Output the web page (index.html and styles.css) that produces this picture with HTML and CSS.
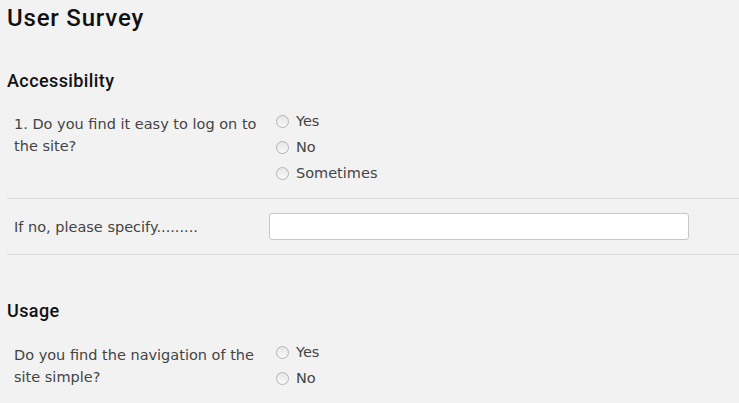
FILE: index.html
```html
<!DOCTYPE html>
<html>
<head>
<meta charset="utf-8">
<link rel="stylesheet" href="styles.css">
</head>
<body>
<h1 class="title">User Survey</h1>

<section class="section">
  <h2 class="section-title">Accessibility</h2>
  <div class="row">
    <div class="question">1. Do you find it easy to log on to the site?</div>
    <div class="options">
      <label class="option"><input type="radio" name="q1" class="radio"><span>Yes</span></label>
      <label class="option"><input type="radio" name="q1" class="radio"><span>No</span></label>
      <label class="option"><input type="radio" name="q1" class="radio"><span>Sometimes</span></label>
    </div>
  </div>
  <div class="row row-input">
    <div class="question">If no, please specify.........</div>
    <div class="field"><input type="text" class="text-input"></div>
  </div>
</section>

<section class="section section-usage">
  <h2 class="section-title">Usage</h2>
  <div class="row row-last">
    <div class="question">Do you find the navigation of the site simple?</div>
    <div class="options">
      <label class="option"><input type="radio" name="q2" class="radio"><span>Yes</span></label>
      <label class="option"><input type="radio" name="q2" class="radio"><span>No</span></label>
    </div>
  </div>
</section>
</body>
</html>
```

FILE: styles.css
```css
html, body {
  margin: 0;
  padding: 0;
  background: #f2f2f2;
}
body {
  padding: 0 0 0 7px;
  font-family: "DejaVu Sans", sans-serif;
  color: #444;
  overflow: hidden;
}
.title {
  margin: 0;
  padding-top: 3px;
  font-family: Roboto, sans-serif;
  font-size: 24px;
  font-weight: 500;
  letter-spacing: 0.8px;
  line-height: 30px;
  color: #111;
}
.section-title {
  margin: 0;
  font-family: Roboto, sans-serif;
  font-size: 18px;
  font-weight: 500;
  letter-spacing: 0.4px;
  line-height: 24px;
  color: #111;
}
.section {
  margin-top: 36px;
}
.section-usage {
  margin-top: 44px;
}
.row {
  display: grid;
  grid-template-columns: 262px 1fr;
  padding: 17px 0 14px 0;
  border-bottom: 1px solid #dcdcdc;
}
.row-input {
  padding: 14px 0 14px 0;
  align-items: center;
}
.row-last {
  padding-top: 18px;
  border-bottom: none;
}
.question {
  padding-top: 3px;
  padding-left: 7px;
  padding-right: 6px;
  font-size: 14.5px;
  line-height: 22px;
}
.row-input .question {
  padding-top: 0;
}
.options {
  display: flex;
  flex-direction: column;
  gap: 4px;
}
.option {
  display: flex;
  align-items: center;
  height: 22px;
  font-size: 14.5px;
}
.radio {
  appearance: none;
  -webkit-appearance: none;
  width: 13px;
  height: 13px;
  margin: 0 7px 0 7px;
  border: 1px solid #b4b4b4;
  border-radius: 50%;
  background: linear-gradient(#e6e6e6, #f9f9f9);
  box-sizing: border-box;
}
.field {
  display: flex;
}
.text-input {
  width: 420px;
  height: 27px;
  box-sizing: border-box;
  border: 1px solid #c8c8c8;
  border-radius: 3px;
  background: #fff;
  margin: 0;
}
```
